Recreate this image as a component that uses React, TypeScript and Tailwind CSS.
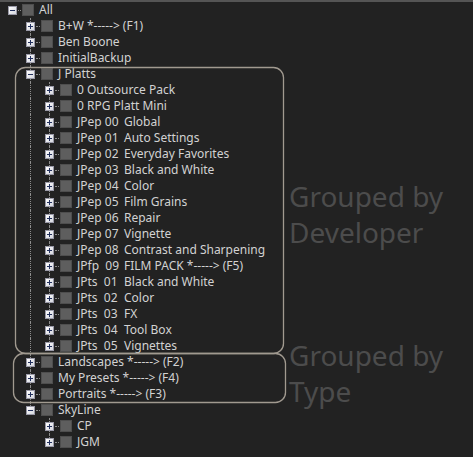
import React from "react";

type Node = { label: React.ReactNode; open?: boolean; children?: Node[] };

const dev = (a: string, b: string) => (
  <span className="whitespace-pre">
    <span className="inline-block w-[47px]">{a}</span>
    {b}
  </span>
);

const tree: Node = {
  label: "All",
  open: true,
  children: [
    { label: "B+W *-----> (F1)" },
    { label: "Ben Boone" },
    { label: "InitialBackup" },
    {
      label: "J Platts",
      open: true,
      children: [
        { label: "0 Outsource Pack" },
        { label: "0 RPG Platt Mini" },
        { label: dev("JPep 00", "Global") },
        { label: dev("JPep 01", "Auto Settings") },
        { label: dev("JPep 02", "Everyday Favorites") },
        { label: dev("JPep 03", "Black and White") },
        { label: dev("JPep 04", "Color") },
        { label: dev("JPep 05", "Film Grains") },
        { label: dev("JPep 06", "Repair") },
        { label: dev("JPep 07", "Vignette") },
        { label: dev("JPep 08", "Contrast and Sharpening") },
        { label: dev("JPfp  09", "FILM PACK *-----> (F5)") },
        { label: dev("JPts  01", "Black and White") },
        { label: dev("JPts  02", "Color") },
        { label: dev("JPts  03", "FX") },
        { label: dev("JPts  04", "Tool Box") },
        { label: dev("JPts  05", "Vignettes") },
      ],
    },
    { label: "Landscapes *-----> (F2)" },
    { label: "My Presets *-----> (F4)" },
    { label: "Portraits *-----> (F3)" },
    {
      label: "SkyLine",
      open: true,
      children: [{ label: "CP" }, { label: "JGM" }],
    },
  ],
};

type Flat = {
  label: React.ReactNode;
  open: boolean;
  level: number;
  guides: boolean[];
  top: boolean;
  bottom: boolean;
};

function flatten(n: Node, level: number, guides: boolean[], hasPrev: boolean, hasNext: boolean, out: Flat[]) {
  out.push({
    label: n.label,
    open: !!n.open,
    level,
    guides,
    top: level > 0 || hasPrev,
    bottom: hasNext,
  });
  if (n.open && n.children) {
    n.children.forEach((c, i) =>
      flatten(c, level + 1, [...guides, hasNext], i > 0, i < n.children!.length - 1, out)
    );
  }
}

const rows: Flat[] = [];
flatten(tree, 0, [], false, false, rows);

function Expander({ open }: { open: boolean }) {
  return (
    <div className="relative z-10 flex h-[9px] w-[9px] items-center justify-center border border-[#9a9aa8] bg-gradient-to-br from-[#ffffff] to-[#d4d6de]">
      <svg width="7" height="7" viewBox="0 0 7 7" className="block">
        <rect x="1" y="3" width="5" height="1" fill="#22305e" />
        {!open && <rect x="3" y="1" width="1" height="5" fill="#22305e" />}
      </svg>
    </div>
  );
}

const dot = "border-dotted border-[#8c8c8c]";

function Row({ r }: { r: Flat }) {
  const colW = (i: number) => (i === 0 ? "w-[18px]" : "w-[19px]");
  return (
    <div className="flex h-4 items-center">
      {r.guides.map((g, i) => (
        <div key={i} className={`flex h-4 shrink-0 pl-[9px] ${colW(i)}`}>
          {g && i > 0 && <div className={`h-4 border-l ${dot}`} />}
        </div>
      ))}
      <div className={`relative flex h-4 shrink-0 items-center pl-[5px] ${colW(r.level)}`}>
        <div className="absolute left-[9px] top-0 flex h-4 flex-col">
          <div className={`h-2 ${r.top ? `border-l ${dot}` : ""}`} />
          <div className={`h-2 ${r.bottom ? `border-l ${dot}` : ""}`} />
        </div>
        <Expander open={r.open} />
        <div className={`ml-[1px] w-[4px] border-t ${dot}`} />
      </div>
      <div className="ml-[1px] h-3 w-3 shrink-0 border border-[#4e4e4e] bg-[#5e5e5e]" />
      <div className="ml-[5px] whitespace-pre text-[12px] leading-4 text-[#d2d2d2]">{r.label}</div>
    </div>
  );
}

export default function App() {
  return (
    <div
      className="relative min-h-screen w-full overflow-hidden border-t-2 border-[#555555] bg-[#222222]"
      style={{ fontFamily: '"Noto Sans", "Open Sans", sans-serif' }}
    >
      <div className="flex flex-col pl-[3px]">
        {rows.map((r, i) => (
          <Row key={i} r={r} />
        ))}
      </div>

      <svg className="pointer-events-none absolute left-0 top-[-2px]" width="473" height="457">
        <rect x="15.5" y="67.5" width="268" height="286" rx="10" fill="none" stroke="#a19a90" strokeWidth="1.3" />
        <rect x="13.5" y="353.5" width="272" height="49" rx="10" fill="none" stroke="#a19a90" strokeWidth="1.3" />
      </svg>

      <div className="absolute left-[289px] top-[176px] text-[28px] leading-[36px] text-[#4c4c4c]">
        <div>Grouped by</div>
        <div>Developer</div>
      </div>
      <div className="absolute left-[289px] top-[335px] text-[28px] leading-[36px] text-[#4c4c4c]">
        <div>Grouped by</div>
        <div>Type</div>
      </div>
    </div>
  );
}
